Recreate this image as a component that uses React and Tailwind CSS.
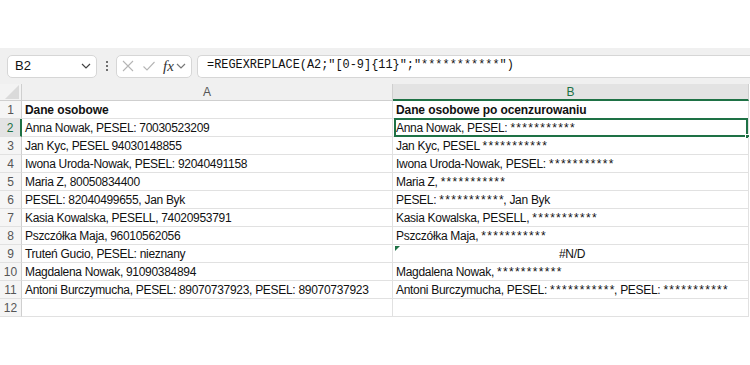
import React from "react";

const S = "***********";
const rowsA = [
  "Dane osobowe",
  "Anna Nowak, PESEL: 70030523209",
  "Jan Kyc, PESEL 94030148855",
  "Iwona Uroda-Nowak, PESEL: 92040491158",
  "Maria Z, 80050834400",
  "PESEL: 82040499655, Jan Byk",
  "Kasia Kowalska, PESELL, 74020953791",
  "Pszczółka Maja, 96010562056",
  "Truteń Gucio, PESEL: nieznany",
  "Magdalena Nowak, 91090384894",
  "Antoni Burczymucha, PESEL: 89070737923, PESEL: 89070737923",
  "",
];
const rowsB = [
  "Dane osobowe po ocenzurowaniu",
  `Anna Nowak, PESEL: ${S}`,
  `Jan Kyc, PESEL ${S}`,
  `Iwona Uroda-Nowak, PESEL: ${S}`,
  `Maria Z, ${S}`,
  `PESEL: ${S}, Jan Byk`,
  `Kasia Kowalska, PESELL, ${S}`,
  `Pszczółka Maja, ${S}`,
  "#N/D",
  `Magdalena Nowak, ${S}`,
  `Antoni Burczymucha, PESEL: ${S}, PESEL: ${S}`,
  "",
];

const sans = { fontFamily: '"Liberation Sans", Arial, sans-serif' };

function Txt({ text }) {
  const parts = text.split(/(\*+)/);
  return (
    <span className="relative">
      {parts.map((p, i) =>
        p.startsWith("*") ? (
          <span key={i}>
            <span className="tracking-[1.3px]">{p.slice(0, -1)}</span>
            <span>*</span>
          </span>
        ) : (
          <span key={i}>{p}</span>
        )
      )}
    </span>
  );
}

function Chevron({ className }) {
  return (
    <svg width="10" height="6" viewBox="0 0 10 6" className={className}>
      <path d="M1 1l4 4 4-4" fill="none" stroke="currentColor" strokeWidth="1.2" />
    </svg>
  );
}

export default function App() {
  return (
    <div className="w-[750px] h-[365px] bg-white overflow-hidden text-[#111]" style={sans}>
      <div className="h-[48px]" />
      {/* formula bar */}
      <div className="h-[36px] bg-[#f0f0f0] flex items-center pl-[7px]">
        <div className="w-[90px] h-[23px] bg-white border border-[#d6d6d6] rounded-[5px] flex items-center justify-between pl-[7px] pr-[5px]">
          <span className="text-[13px]">B2</span>
          <Chevron className="text-[#444]" />
        </div>
        <div className="w-[19px] flex flex-col items-center gap-[2px]">
          <span className="w-[2px] h-[2px] bg-[#444] rounded-full" />
          <span className="w-[2px] h-[2px] bg-[#444] rounded-full" />
          <span className="w-[2px] h-[2px] bg-[#444] rounded-full" />
        </div>
        <div className="w-[76px] h-[23px] bg-white border border-[#d6d6d6] rounded-[5px] flex items-center pl-[4px] gap-[7px]">
          <svg width="14" height="14" viewBox="0 0 14 14">
            <path d="M2 2l10 10M12 2L2 12" stroke="#b5b5b5" strokeWidth="1.1" />
          </svg>
          <svg width="14" height="14" viewBox="0 0 14 14">
            <path d="M1.5 7.5l3.5 3.5 7.5-8" fill="none" stroke="#b5b5b5" strokeWidth="1.1" />
          </svg>
          <span className="flex items-center gap-[2px]">
            <span className="italic text-[15px] text-[#333] leading-none" style={{ fontFamily: '"Liberation Serif", serif' }}>fx</span>
            <Chevron className="text-[#777]" />
          </span>
        </div>
        <div className="ml-[5px] flex-1 h-[23px] bg-white border border-[#d6d6d6] rounded-l-[5px] border-r-0 flex items-center pl-[9px]">
          <span className="text-[11.9px] text-[#111]" style={{ fontFamily: '"Liberation Mono", monospace' }}>
            =REGEXREPLACE(A2;"[0-9]{"{"}11{"}"}";"***********")
          </span>
        </div>
      </div>
      {/* header row */}
      <div className="flex h-[17px] text-[12px]">
        <div className="w-[22px] bg-[#f3f3f3] border-r border-b border-[#cfcfcf] relative">
          <svg width="14" height="14" viewBox="0 0 14 14" className="absolute right-[2px] bottom-[1px]">
            <path d="M14 0V14H0Z" fill="#dadada" />
          </svg>
        </div>
        <div className="w-[371px] bg-[#f0f0f0] border-r border-b border-[#cfcfcf] flex items-center justify-center text-[#555]">A</div>
        <div className="w-[356px] bg-[#e3e3e3] border-r border-[#cfcfcf] border-b-2 border-b-[#1e7145] flex items-center justify-center text-[#1e7145]">B</div>
      </div>
      {/* rows */}
      {rowsA.map((a, i) => {
        const sel = i === 1;
        const bold = i === 0;
        const isNA = i === 8;
        return (
          <div key={i} className="flex h-[18px]">
            <div
              className={`w-[22px] border-b border-[#e1e1e1] flex items-center justify-center text-[12px] pt-[1px] ${
                sel ? "bg-[#e3e3e3] text-[#1e7145] border-r-2 border-r-[#1e7145]" : "bg-[#f5f5f5] text-[#555] border-r border-r-[#cfcfcf]"
              }`}
            >
              {i + 1}
            </div>
            <div
              className={`w-[371px] border-r border-b border-[#e1e1e1] flex items-center pl-[3px] pt-[1px] text-[12px] whitespace-nowrap ${
                bold ? "font-bold tracking-[-0.1px]" : "tracking-[-0.3px]"
              }`}
            >
              {a}
            </div>
            <div
              className={`w-[356px] border-r border-b border-[#e1e1e1] flex items-center pl-[3px] pt-[1px] text-[12px] whitespace-nowrap relative ${
                bold ? "font-bold tracking-[-0.1px]" : "tracking-[-0.3px]"
              } ${isNA ? "justify-center" : ""}`}
            >
              {sel && <div className="absolute left-[1px] -top-[1px] right-[0px] bottom-[-1px] border-2 border-[#1e7145] pointer-events-none" />}
              {sel && <div className="absolute right-[-2px] bottom-[-3px] w-[5px] h-[5px] bg-[#1e7145] border border-white" />}
              {isNA && (
                <svg width="5" height="5" viewBox="0 0 5 5" className="absolute left-[2px] top-[1px]">
                  <path d="M0 0H5L0 5Z" fill="#1e7145" />
                </svg>
              )}
              <Txt text={rowsB[i]} />
            </div>
          </div>
        );
      })}
    </div>
  );
}
